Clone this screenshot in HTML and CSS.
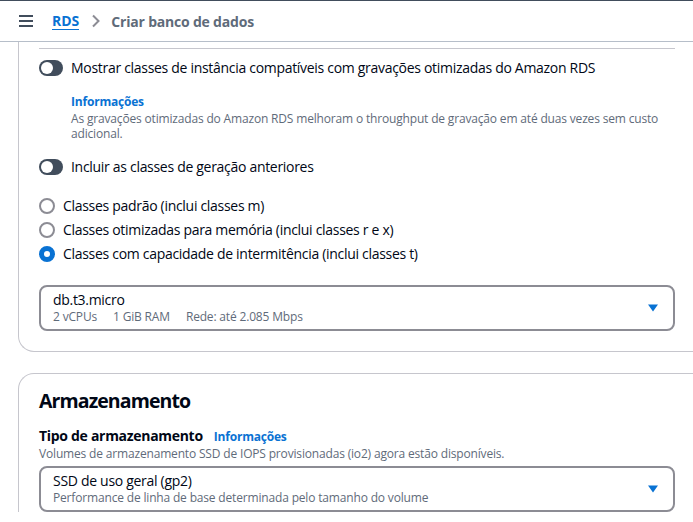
FILE: index.html
```html
<!DOCTYPE html>
<html lang="pt-BR">
<head>
<meta charset="utf-8">
<title>Criar banco de dados</title>
<link rel="stylesheet" href="styles.css">
</head>
<body>
<div class="topline"></div>
<header class="header">
  <svg class="burger" width="16" height="14" viewBox="0 0 16 14"><path d="M1 2h14M1 7h14M1 12h14" stroke="#414d5c" stroke-width="2"/></svg>
  <a class="crumb-link" href="#">RDS</a>
  <svg class="chev" width="10" height="14" viewBox="0 0 10 14"><path d="M2 1.5l5.5 5.5-5.5 5.5" fill="none" stroke="#8c8c94" stroke-width="2"/></svg>
  <span class="crumb-current">Criar banco de dados</span>
</header>
<main class="main">
  <section class="card card-top">
    <div class="divider"></div>
    <div class="toggle-row">
      <span class="toggle"><span class="knob"></span></span>
      <span class="label">Mostrar classes de instância compatíveis com gravações otimizadas do Amazon RDS</span>
    </div>
    <div class="info-block">
      <a class="info" href="#">Informações</a>
      <p class="desc">As gravações otimizadas do Amazon RDS melhoram o throughput de gravação em até duas vezes sem custo adicional.</p>
    </div>
    <div class="toggle-row toggle-row2">
      <span class="toggle"><span class="knob"></span></span>
      <span class="label">Incluir as classes de geração anteriores</span>
    </div>
    <div class="radios">
      <div class="radio-row"><span class="radio"></span><span class="label">Classes padrão (inclui classes m)</span></div>
      <div class="radio-row"><span class="radio"></span><span class="label">Classes otimizadas para memória (inclui classes r e x)</span></div>
      <div class="radio-row"><span class="radio checked"></span><span class="label">Classes com capacidade de intermitência (inclui classes t)</span></div>
    </div>
    <div class="select">
      <div class="sel-text">
        <div class="sel-main">db.t3.micro</div>
        <div class="sel-sub"><span>2 vCPUs</span><span>1 GiB RAM</span><span>Rede: até 2.085 Mbps</span></div>
      </div>
      <svg class="caret" width="12" height="10" viewBox="0 0 12 10"><path d="M1 1.5h10L6 8.5z" fill="#0972d3"/></svg>
    </div>
  </section>
  <section class="card card-bottom">
    <h2 class="title">Armazenamento</h2>
    <div class="field-label"><span class="flabel">Tipo de armazenamento</span><a class="info" href="#">Informações</a></div>
    <p class="desc desc2">Volumes de armazenamento SSD de IOPS provisionadas (io2) agora estão disponíveis.</p>
    <div class="select">
      <div class="sel-text">
        <div class="sel-main">SSD de uso geral (gp2)</div>
        <div class="sel-sub"><span>Performance de linha de base determinada pelo tamanho do volume</span></div>
      </div>
      <svg class="caret" width="12" height="10" viewBox="0 0 12 10"><path d="M1 1.5h10L6 8.5z" fill="#0972d3"/></svg>
    </div>
  </section>
</main>
</body>
</html>
```
FILE: styles.css
```css
html, body {
  margin: 0;
  padding: 0;
  background: #ffffff;
  overflow: hidden;
}
body {
  font-family: "Open Sans", "Noto Sans", sans-serif;
  color: #000716;
  font-size: 14px;
  letter-spacing: -0.3px;
  width: 693px;
  height: 522px;
}
.topline {
  height: 1px;
  background: #414d5c;
}
.header {
  height: 40px;
  border-bottom: 1px solid #b6bec9;
  display: flex;
  align-items: center;
  padding-left: 18px;
}
.burger { display: block; margin-right: 18px; }
.crumb-link {
  color: #0972d3;
  font-weight: 700;
  font-size: 14px;
  text-decoration: none;
  border-bottom: 1px solid #0972d3;
  line-height: 16px;
  letter-spacing: 0;
}
.chev { margin: 0 10px 0 12px; display: block; }
.crumb-current {
  color: #5f6b7a;
  font-weight: 700;
  font-size: 14px;
  letter-spacing: -0.2px;
}
.main {
  padding-left: 18px;
}
.card {
  width: 675px;
  box-sizing: border-box;
  border: 1px solid #c6c6cd;
  border-right: none;
  padding: 0 18px 0 20px;
}
.card-top {
  border-top: none;
  border-radius: 0 0 0 16px;
  padding-top: 6px;
  padding-bottom: 20px;
}
.card-bottom {
  margin-top: 21px;
  border-bottom: none;
  border-radius: 16px 0 0 0;
  padding-top: 14px;
}
.divider {
  height: 1px;
  background: #c6c6cd;
}
.toggle-row {
  display: flex;
  align-items: center;
  margin-top: 9px;
  height: 20px;
}
.toggle-row2 { margin-top: 16px; }
.toggle {
  width: 24px;
  height: 16px;
  border-radius: 8px;
  background: #414d5c;
  position: relative;
  margin-right: 8px;
  flex: none;
}
.knob {
  position: absolute;
  left: 2px;
  top: 2px;
  width: 12px;
  height: 12px;
  border-radius: 50%;
  background: #fff;
}
.label {
  font-size: 14px;
  line-height: 20px;
}
.info-block {
  margin-left: 32px;
  margin-top: 13px;
}
.info {
  color: #0972d3;
  font-weight: 700;
  font-size: 12px;
  text-decoration: none;
  line-height: 16px;
  letter-spacing: -0.2px;
}
.desc {
  margin: 1px 0 0;
  font-size: 12px;
  line-height: 15px;
  color: #5f6b7a;
  letter-spacing: -0.17px;
}
.radios {
  margin-top: 17px;
}
.radio-row {
  display: flex;
  align-items: center;
  height: 24px;
}
.radio {
  width: 12px;
  height: 12px;
  border: 2px solid #8c8c94;
  border-radius: 50%;
  margin-right: 8px;
  flex: none;
}
.radio.checked {
  width: 6px;
  height: 6px;
  border: 5px solid #0972d3;
}
.select {
  margin-top: 19px;
  border: 2px solid #8c8c94;
  border-radius: 8px;
  height: 46px;
  box-sizing: border-box;
  display: flex;
  align-items: center;
  padding: 0 14px 0 12px;
}
.sel-text { flex: 1; }
.sel-main {
  font-size: 14px;
  line-height: 18px;
}
.sel-sub {
  font-size: 12px;
  line-height: 16px;
  color: #5f6b7a;
  display: flex;
  gap: 16px;
  letter-spacing: -0.17px;
}
.caret { display: block; }
.title {
  margin: 0;
  font-size: 19.5px;
  font-weight: 700;
  line-height: 26px;
  letter-spacing: -0.9px;
}
.field-label {
  margin-top: 12px;
  display: flex;
  align-items: baseline;
  gap: 11px;
  line-height: 20px;
}
.flabel {
  font-weight: 700;
  font-size: 14px;
  letter-spacing: -0.3px;
}
.desc2 { margin-top: 0; line-height: 16px; }
.card-bottom .select { margin-top: 4px; }
```
